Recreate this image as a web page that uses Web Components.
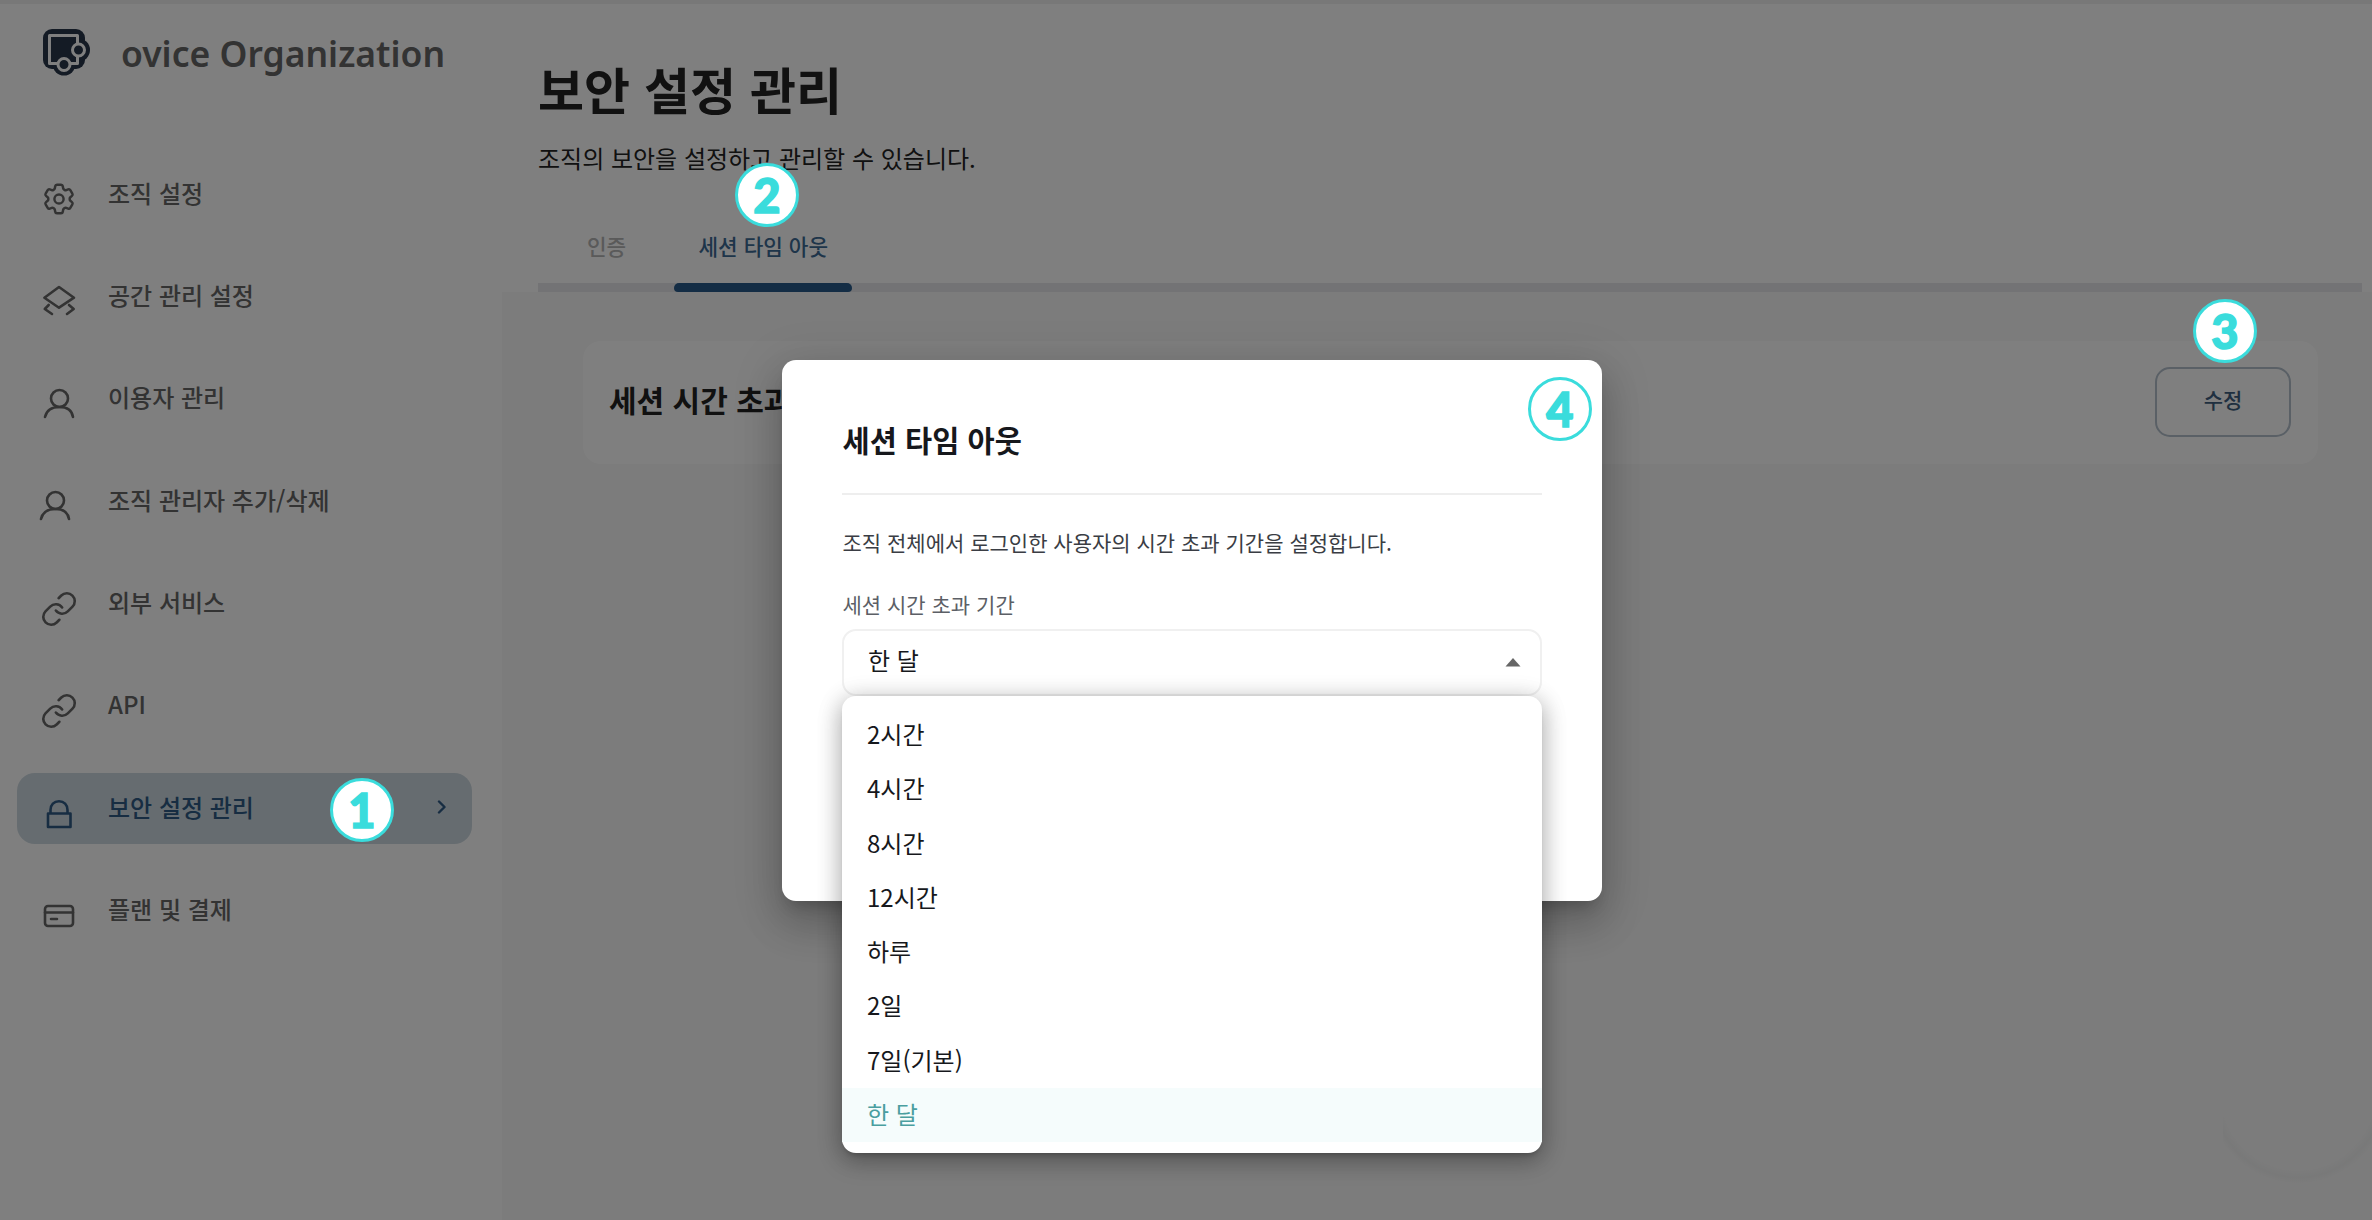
<!DOCTYPE html>
<html lang="ko">
<head>
<meta charset="utf-8">
<title>보안 설정 관리</title>
<style>
html,body{margin:0;padding:0;height:100%;background:#fff;overflow:hidden}
body{font-family:"Noto Sans CJK KR","Noto Sans",sans-serif;color:#222}
</style>
</head>
<body>
<ov-app>
  <ov-sidebar slot="sidebar">
    <ov-nav-item icon="gear">조직 설정</ov-nav-item>
    <ov-nav-item icon="layers">공간 관리 설정</ov-nav-item>
    <ov-nav-item icon="user">이용자 관리</ov-nav-item>
    <ov-nav-item icon="user2">조직 관리자 추가/삭제</ov-nav-item>
    <ov-nav-item icon="link">외부 서비스</ov-nav-item>
    <ov-nav-item icon="link">API</ov-nav-item>
    <ov-nav-item icon="lock" active>보안 설정 관리</ov-nav-item>
    <ov-nav-item icon="card">플랜 및 결제</ov-nav-item>
  </ov-sidebar>
  <ov-page slot="main">
    <ov-card>세션 시간 초과</ov-card>
  </ov-page>
  <ov-scrim slot="overlay"></ov-scrim>
  <ov-modal slot="overlay">
    <span slot="title">세션 타임 아웃</span>
    <span slot="desc">조직 전체에서 로그인한 사용자의 시간 초과 기간을 설정합니다.</span>
    <span slot="label">세션 시간 초과 기간</span>
    <ov-select value="한 달">
      <ov-option>2시간</ov-option>
      <ov-option>4시간</ov-option>
      <ov-option>8시간</ov-option>
      <ov-option>12시간</ov-option>
      <ov-option>하루</ov-option>
      <ov-option>2일</ov-option>
      <ov-option>7일(기본)</ov-option>
      <ov-option selected>한 달</ov-option>
    </ov-select>
  </ov-modal>
  <ov-badge slot="overlay" style="left:330px;top:778px">1</ov-badge>
  <ov-badge slot="overlay" style="left:735px;top:163px">2</ov-badge>
  <ov-badge slot="overlay" style="left:2193px;top:299px">3</ov-badge>
  <ov-badge slot="overlay" style="left:1528px;top:377px">4</ov-badge>
</ov-app>
<script>
const KR='"Noto Sans CJK KR","Noto Sans",sans-serif';
function define(name,html,extra){
  const t=document.createElement('template');t.innerHTML=html;
  customElements.define(name,class extends HTMLElement{
    constructor(){super();this.attachShadow({mode:'open'}).appendChild(t.content.cloneNode(true));}
    connectedCallback(){if(extra)extra(this);}
  });
}
const ICONS={
 gear:'<svg width="38" height="38" viewBox="0 0 24 24" fill="none" stroke="currentColor" stroke-width="1.55" stroke-linejoin="round"><path d="M9.594 3.94c.09-.542.56-.94 1.11-.94h2.593c.55 0 1.02.398 1.11.94l.213 1.281c.063.374.313.686.645.87.074.04.147.083.22.127.325.196.72.257 1.075.124l1.217-.456a1.125 1.125 0 0 1 1.37.49l1.296 2.247a1.125 1.125 0 0 1-.26 1.431l-1.003.827c-.293.241-.438.613-.43.992a7.723 7.723 0 0 1 0 .255c-.008.378.137.75.43.991l1.004.827c.424.35.534.955.26 1.43l-1.298 2.247a1.125 1.125 0 0 1-1.369.491l-1.217-.456c-.355-.133-.75-.072-1.076.124a6.47 6.47 0 0 1-.22.128c-.331.183-.581.495-.644.869l-.213 1.281c-.09.543-.56.94-1.11.94h-2.594c-.55 0-1.019-.398-1.11-.94l-.213-1.281c-.062-.374-.312-.686-.644-.87a6.52 6.52 0 0 1-.22-.127c-.325-.196-.72-.257-1.076-.124l-1.217.456a1.125 1.125 0 0 1-1.369-.49l-1.297-2.247a1.125 1.125 0 0 1 .26-1.431l1.004-.827c.292-.24.437-.613.43-.991a6.932 6.932 0 0 1 0-.255c.007-.38-.138-.751-.43-.992l-1.004-.827a1.125 1.125 0 0 1-.26-1.43l1.297-2.247a1.125 1.125 0 0 1 1.37-.491l1.216.456c.356.133.751.072 1.076-.124.072-.044.146-.086.22-.128.332-.183.582-.495.644-.869l.214-1.28Z"/><circle cx="12" cy="12" r="2.9"/></svg>',
 layers:'<svg width="36" height="36" viewBox="0 0 36 36" fill="none" stroke="currentColor" stroke-width="2.6" stroke-linejoin="round" stroke-linecap="round"><path d="M18 4 33 14.7 18 24.7 3.4 14.7Z"/><path d="M7.7 22 3.8 26 11 31M28 22 32.7 26 26 31"/></svg>',
 user:'<svg width="36" height="36" viewBox="0 0 36 36" fill="none" stroke="currentColor" stroke-width="2.6" stroke-linecap="round"><circle cx="18.5" cy="12.5" r="8.5"/><path d="M4 31c1.500-6.500 7-10 14.500-10S31 24.500 32 31"/></svg>',
 link:'<svg width="38" height="38" viewBox="0 0 24 24" fill="none" stroke="currentColor" stroke-width="1.65" stroke-linecap="round" stroke-linejoin="round"><path d="M10 13a5 5 0 0 0 7.54.54l3-3a5 5 0 0 0-7.07-7.07l-1.72 1.71"/><path d="M14 11a5 5 0 0 0-7.54-.54l-3 3a5 5 0 0 0 7.07 7.07l1.71-1.71"/></svg>',
 lock:'<svg width="36" height="36" viewBox="0 0 36 36" fill="none" stroke="currentColor" stroke-width="2.6" stroke-linejoin="round"><path d="M7 18.500h22.500v13.500H7Z"/><path d="M9.500 18.500v-3.500c0-5.200 3.500-8.800 8.500-8.800s8.500 3.600 8.500 8.800v3.500"/></svg>',
 card:'<svg width="36" height="36" viewBox="0 0 36 36" fill="none" stroke="currentColor" stroke-width="2.6" stroke-linecap="round"><rect x="4" y="8" width="28" height="20" rx="3"/><path d="M4 14.500h28M10 21h6"/></svg>'
};
ICONS.user2=ICONS.user;
define('ov-icon','<style>:host{display:flex;align-items:center;justify-content:center;width:38px;height:38px}svg{display:block}</style><span id="i" style="display:contents"></span>',el=>{
  el.shadowRoot.getElementById('i').innerHTML=ICONS[el.getAttribute('name')]||'';
});
define('ov-logo',`<style>:host{display:block;width:48px;height:48px}svg{display:block}</style>
<svg width="48" height="48" viewBox="0 0 48 48"><g fill="#28364a"><rect x="0" y="0" width="42" height="40" rx="9"/><circle cx="35.500" cy="21" r="11.500"/><circle cx="21" cy="35" r="11.500"/></g>
<rect x="6.500" y="6.500" width="28" height="28" fill="#28364a" stroke="#fff" stroke-width="3" stroke-linejoin="round"/>
<circle cx="35.500" cy="21" r="6" fill="#28364a" stroke="#fff" stroke-width="3"/>
<circle cx="21" cy="35.500" r="6" fill="#28364a" stroke="#fff" stroke-width="3"/></svg>`);
define('ov-app',`<style>
:host{display:grid;grid-template-columns:502px 1fr;height:1220px;width:2372px;overflow:hidden;position:relative}
.sheen{position:absolute;left:0;right:0;top:0;height:4px;background:rgba(0,0,0,.06);z-index:0}
</style><slot name="sidebar"></slot><slot name="main"></slot><slot name="overlay"></slot><div class="sheen"></div>`);
define('ov-sidebar',`<style>
:host{display:block;background:#fff;font-family:${KR}}
header{display:flex;align-items:flex-start;padding:29px 0 0 43px;height:158.500px;box-sizing:border-box}
.name{font:600 35.500px/50px "Noto Sans",sans-serif;color:#666;margin:-1.500px 0 0 30px;white-space:nowrap}
nav{display:flex;flex-direction:column;gap:31.400px;padding:0 30px 0 17px}
</style><header><ov-logo></ov-logo><div class="name">ovice Organization</div></header><nav><slot></slot></nav>`);
define('ov-nav-item',`<style>
:host{display:flex;align-items:center;height:71px;border-radius:18px;color:#666;font:500 24px/34px ${KR};white-space:nowrap;box-sizing:border-box}
:host([active]){background:#ccd8e0;color:#2e5a85}
.ic{width:91px;display:flex;justify-content:center;box-sizing:border-box;margin-top:10px;flex:none}
.ic ov-icon{margin-left:-7px}
:host([icon=user2]) .ic ov-icon{margin-left:-15px}
.t{flex:1;margin-top:-3px}
.chev{display:none;margin-right:25px;margin-top:-3px}
:host([active]) .chev{display:block}
</style><div class="ic"><ov-icon></ov-icon></div><div class="t"><slot></slot></div>
<svg class="chev" width="10" height="14" viewBox="0 0 10 14" fill="none" stroke="currentColor" stroke-width="2.400" stroke-linecap="round" stroke-linejoin="round"><path d="M2 1.500 7.500 7 2 12.500"/></svg>`,el=>{
  const ic=el.shadowRoot.querySelector('ov-icon');
  ic.setAttribute('name',el.getAttribute('icon'));
  ic.connectedCallback();
});
define('ov-tabs',`<style>
:host{display:flex;gap:23.300px;padding-left:24.500px;margin-top:51px;height:67px;box-shadow:inset 0 -9px 0 #e6e6ea;font:500 21.300px/41px ${KR}}
.tab{display:flex;flex-direction:column;color:#b4b4b4;height:67px;box-sizing:border-box}
.tab span{padding:0 24.500px;flex:1}
.tab.on{color:#3c6a94}
.tab i{display:block;height:9px;border-radius:5px 5px 4px 4px}
.tab.on i{background:#285a8a}
</style><div class="tab"><span>인증</span><i></i></div><div class="tab on"><span>세션 타임 아웃</span><i></i></div>`);
define('ov-page',`<style>
:host{display:flex;flex-direction:column;background:#fff;min-width:0;font-family:${KR}}
.top{padding:58px 10px 0 36px;height:292px;box-sizing:border-box}
h1{margin:0;font:700 50px/60px ${KR};color:#222;white-space:nowrap}
p{margin:24px 0 0;font:400 24px/32px ${KR};color:#222}
.panel{flex:1;background:#f8f8f8;padding:49px 54px 0 81px;position:relative}
.glow{position:absolute;right:0;bottom:37px;width:149px;height:84px;overflow:hidden;background:radial-gradient(circle 90px at 75px -6px,transparent 86%,rgba(90,110,110,.04) 94%,transparent 100%)}
</style><div class="top"><h1>보안 설정 관리</h1><p>조직의 보안을 설정하고 관리할 수 있습니다.</p><ov-tabs></ov-tabs></div>
<div class="panel"><slot></slot><div class="glow"></div></div>`);
define('ov-card',`<style>
:host{display:flex;align-items:center;justify-content:space-between;height:123px;background:#fff;border-radius:18px;padding:0 27px 0 26px;box-sizing:border-box}
.t{font:700 30px/44px ${KR};color:#222;white-space:nowrap;padding-bottom:8px}
button{width:136px;height:70px;border:2px solid #b4c0cc;border-radius:15px;background:transparent;font:500 21px/30px ${KR};color:#3e5e80;padding:0 0 6px;margin-top:-1px}
</style><div class="t"><slot></slot></div><button>수정</button>`);
define('ov-scrim',`<style>:host{position:absolute;inset:0;background:rgba(0,0,0,.5);z-index:1}</style>`);
define('ov-modal',`<style>
:host{position:absolute;left:782px;top:360px;width:820px;height:541px;box-sizing:border-box;padding:57px 60px 0 60px;background:#fff;border-radius:14px;z-index:2;font-family:${KR};
box-shadow:0 11px 15px -7px rgba(0,0,0,.2),0 24px 38px 3px rgba(0,0,0,.14),0 9px 46px 8px rgba(0,0,0,.12)}
.title{font:700 29.500px/44px ${KR};color:#16181c;padding-left:.5px}
hr{margin:32px 0 29.500px;border:0;height:2px;background:#eee}
.desc{font:400 21px/34px ${KR};color:#3a3d44;white-space:nowrap;padding-left:.5px}
.label{margin:30.500px 0 10px;font:400 21px/30px ${KR};color:#5c5f66;padding-left:.5px}
</style><div class="title"><slot name="title"></slot></div><hr><div class="desc"><slot name="desc"></slot></div><div class="label"><slot name="label"></slot></div><slot></slot>`);
define('ov-select',`<style>
:host{display:block;position:relative;height:67px}
.box{display:flex;align-items:center;justify-content:space-between;height:67px;box-sizing:border-box;border:2px solid #f0f0f0;border-radius:14px;padding:0 19px 5px 24px;font:400 24px/36px ${KR};color:#16181c}
.box svg{display:block;margin-top:5px}
.menu{position:absolute;left:0;right:0;top:67px;height:457px;box-sizing:border-box;padding:12px 0 11px;background:#fff;border-radius:14px;
box-shadow:0 5px 5px -3px rgba(0,0,0,.2),0 8px 24px 1px rgba(0,0,0,.22),0 3px 24px 2px rgba(0,0,0,.14)}
</style><div class="box"><span id="v"></span><svg width="16" height="9" viewBox="0 0 16 9"><path d="M8 0 15.500 8.500H.5Z" fill="#666"/></svg></div><div class="menu"><slot></slot></div>`,el=>{
  el.shadowRoot.getElementById('v').textContent=el.getAttribute('value');
});
define('ov-option',`<style>
:host{display:flex;align-items:center;height:54.250px;box-sizing:border-box;padding:0 0 2px 25px;font:400 24px/34px ${KR};color:#16181c}
:host([selected]){background:#f5fcfc;color:#4a9ea0}
</style><slot></slot>`);
define('ov-badge',`<style>
:host{position:absolute;width:64px;height:64px;box-sizing:border-box;border:3px solid #3adcdc;border-radius:50%;background:#fff;color:#3adcdc;display:flex;align-items:center;justify-content:center;font:900 47px/1 "Lato","Inter",sans-serif;-webkit-text-stroke:1.5px #3adcdc;z-index:3}
</style><slot></slot>`);
</script>
</body>
</html>
